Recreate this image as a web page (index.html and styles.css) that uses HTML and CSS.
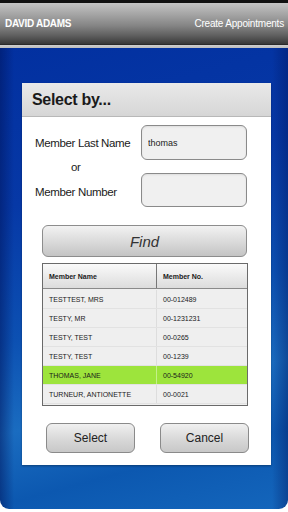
FILE: index.html
```html
<!DOCTYPE html>
<html lang="en">
<head>
    <meta charset="UTF-8">
    <meta name="viewport" content="width=device-width, initial-scale=1.0">
    <title>Create Appointments</title>
    <link rel="stylesheet" href="styles.css">
</head>
<body>
    <div class="app">
        <div class="topbar"></div>
        <div class="header">
            <span class="user">DAVID ADAMS</span>
            <span class="screen">Create Appointments</span>
        </div>
        <div class="divider"></div>
        <div class="stage">
            <div class="panel">
                <div class="panel_title">Select by...</div>
                <div class="panel_body">
                    <div class="search">
                        <label class="lbl lbl1">Member Last Name</label>
                        <input type="text" class="field field1" value="thomas">
                        <span class="lbl lbl_or">or</span>
                        <label class="lbl lbl2">Member Number</label>
                        <input type="text" class="field field2" value="">
                    </div>
                    <button class="find">Find</button>
                    <div class="results">
                        <div class="row head">
                            <div class="c1">Member Name</div>
                            <div class="c2">Member No.</div>
                        </div>
                        <div class="row"><div class="c1">TESTTEST, MRS</div><div class="c2">00-012489</div></div>
                        <div class="row"><div class="c1">TESTY, MR</div><div class="c2">00-1231231</div></div>
                        <div class="row"><div class="c1">TESTY, TEST</div><div class="c2">00-0265</div></div>
                        <div class="row"><div class="c1">TESTY, TEST</div><div class="c2">00-1239</div></div>
                        <div class="row picked"><div class="c1">THOMAS, JANE</div><div class="c2">00-54920</div></div>
                        <div class="row"><div class="c1">TURNEUR, ANTIONETTE</div><div class="c2">00-0021</div></div>
                    </div>
                    <div class="actions">
                        <button class="btn">Select</button>
                        <button class="btn">Cancel</button>
                    </div>
                </div>
            </div>
        </div>
    </div>
</body>
</html>
```

FILE: styles.css
```css
body{
    margin:0px;
    padding:0px;
    background-color:#ffffff;
    font-family: "Liberation Sans", Arial, sans-serif;
}
.app{
    width:288px;
    height:512px;
    display:flex;
    flex-direction:column;
    overflow:hidden;
}
.topbar{
    height:3px;
    background-color:#111;
}
.header{
    height:41px;
    display:flex;
    align-items:center;
    justify-content:space-between;
    padding:0 4px 0 5px;
    background-image: linear-gradient(to bottom,#c4c4c4 0%,#a2a2a2 30%,#858585 55%,#5e5e5e 80%,#383838 100%);
    color:white;
    font-size:10px;
}
.user{
    font-weight:bold;
    letter-spacing:-0.3px;
}
.screen{
    letter-spacing:-0.2px;
}
.divider{
    height:4px;
    background-image: linear-gradient(to bottom,#2a2a2a 0px,#2a2a2a 1px,#cfcfcf 1px,#bcbcbc 4px);
}
.stage{
    height:461px;
    border-radius:0 0 9px 9px;
    padding:35px 17px 0 22px;
    box-sizing:border-box;
    background-color:#0a44a8;
    background-image:
        linear-gradient(to right, rgba(0,20,90,0.5) 0px, rgba(0,20,90,0) 14px, rgba(0,20,90,0) 272px, rgba(0,20,90,0.4) 288px),
        linear-gradient(165deg,#0230a0 0%,#0638a6 30%,#0c50b2 55%,#1a6cc0 72%,#0c58b0 85%,#1466bc 100%);
}
.panel{
    width:249px;
    height:382px;
    background-color:white;
    box-shadow: 0 1px 2px rgba(0,0,0,0.35);
}
.panel_title{
    height:34px;
    display:flex;
    align-items:center;
    padding-left:10px;
    box-sizing:border-box;
    border-bottom:1px solid #b8b8b8;
    background-image: linear-gradient(to bottom,#e9e9e9,#d6d6d6);
    font-size:16px;
    font-weight:bold;
    color:#1a1a1a;
    letter-spacing:-0.3px;
}
.panel_body{
    padding:8px 23px 0 20px;
}
.search{
    display:grid;
    grid-template-columns: 106px 106px;
    grid-template-rows: 35px 13px 34px;
    margin-left:-7px;
}
.lbl{
    font-size:11.5px;
    color:#1a1a1a;
    letter-spacing:-0.35px;
    align-self:center;
    white-space:nowrap;
}
.lbl1{ grid-column:1; grid-row:1; }
.lbl_or{ grid-column:1; grid-row:2; padding-left:36px; }
.lbl2{ grid-column:1; grid-row:3; padding-top:4px; }
.field{
    width:106px;
    height:100%;
    box-sizing:border-box;
    border:1.5px solid #8a8a8a;
    border-radius:6px;
    background-color:#f0f0f0;
    padding:0 6px;
    font-family:"Liberation Sans", Arial, sans-serif;
    font-size:9px;
    color:#222;
    box-shadow: inset 0 1px 2px rgba(0,0,0,0.08);
}
.field1{ grid-column:2; grid-row:1; }
.field2{ grid-column:2; grid-row:3; }
input:focus, button:focus{
    outline:none;
}
.find{
    display:block;
    margin-top:18px;
    width:205px;
    height:32px;
    border:1px solid #8d8d8d;
    border-radius:6px;
    background-image: linear-gradient(to bottom,#f2f2f2,#d9d9d9 55%,#c4c4c4);
    font-family:"Liberation Sans", Arial, sans-serif;
    font-size:15px;
    font-style:italic;
    color:#333;
}
.results{
    margin-top:6px;
    width:206px;
    border:1px solid #6a6a6a;
    background-color:#efefef;
    box-sizing:border-box;
    padding-bottom:1px;
}
.row{
    display:grid;
    grid-template-columns:114px 1fr;
    height:19px;
    font-size:7px;
    color:#1a1a1a;
    border-bottom:1px solid #e2e2e2;
    box-sizing:border-box;
}
.row .c1, .row .c2{
    display:flex;
    align-items:center;
    padding-left:6px;
}
.row .c1{
    border-right:1px solid #dddddd;
}
.row.head{
    height:25px;
    margin-bottom:1px;
    font-weight:bold;
    border-bottom:1px solid #8a8a8a;
    background-image: linear-gradient(to bottom,#fafafa,#dcdcdc);
}
.row.head .c1{
    border-right:1px solid #777;
}
.row.picked{
    background-color:#9de43c;
}
.row.picked .c1{
    border-right:1px solid #c4f08a;
}
.actions{
    display:flex;
    justify-content:space-between;
    margin-top:17px;
    padding:0 0 0 4px;
    width:203px;
}
.btn{
    width:89px;
    height:30px;
    border:1px solid #8a8a8a;
    border-radius:6px;
    background-image: linear-gradient(to bottom,#f0f0f0,#d6d6d6 60%,#c8c8c8);
    font-family:"Liberation Sans", Arial, sans-serif;
    font-size:12px;
    color:#222;
}
```
